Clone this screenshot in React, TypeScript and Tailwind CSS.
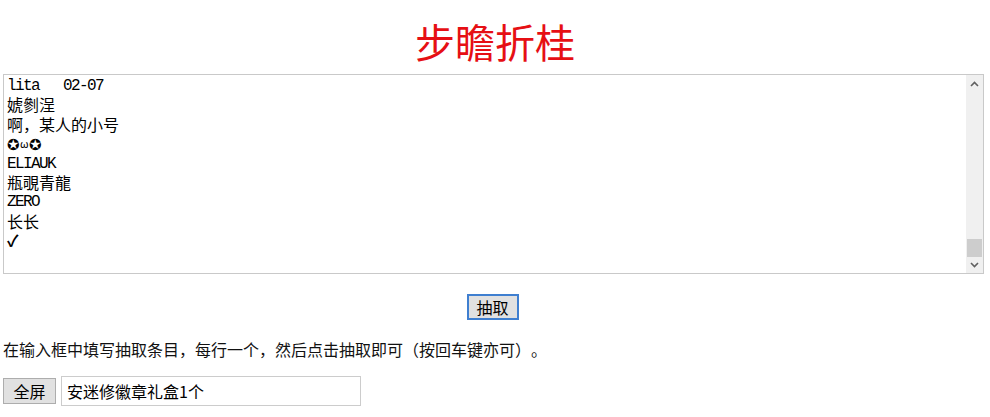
import React from "react";

const cjk = '"Noto Sans CJK SC", "Noto Sans", sans-serif';
const mono = '"Liberation Mono", "Noto Sans CJK SC", monospace';

type Line = { text: string; latin?: boolean };

const lines: Line[] = [
  { text: "lita   02-07", latin: true },
  { text: "婋剼浧" },
  { text: "啊，某人的小号" },
  { text: "✪ω✪" },
  { text: "ELIAUK", latin: true },
  { text: "瓶覗青龍" },
  { text: "ZERO", latin: true },
  { text: "长长" },
  { text: "✓" },
];

function Chevron({ up }: { up?: boolean }) {
  return (
    <svg width="9" height="6" viewBox="0 0 9 6">
      <path
        d={up ? "M1 5 L4.5 1.5 L8 5" : "M1 1 L4.5 4.5 L8 1"}
        fill="none"
        stroke="#606060"
        strokeWidth="1.6"
      />
    </svg>
  );
}

export default function App() {
  return (
    <div
      className="w-[990px] h-[417px] overflow-hidden bg-white px-[3px] text-black"
      style={{ fontFamily: cjk }}
    >
      <h1 className="mt-[17px] text-center text-[40px] leading-[48px] font-normal text-[#e60f14]">
        步瞻折桂
      </h1>

      <div className="mt-[9px] flex h-[200px] w-[981px] border border-[#c9c9c9] bg-white">
        <div className="flex-1 pl-[3px] pt-[1px]">
          {lines.map((l, i) =>
            l.latin ? (
              <div
                key={i}
                className="h-[19.4px] whitespace-pre pt-[2px] text-[16px] leading-[17.4px] tracking-[-1.6px] text-black"
                style={{ fontFamily: mono }}
              >
                {l.text}
              </div>
            ) : (
              <div
                key={i}
                className="h-[19.4px] whitespace-pre text-[16px] leading-[19.4px] text-black"
                style={{ fontFamily: cjk }}
              >
                {l.text === "✪ω✪" ? (
                  <span className="text-[15px]">
                    ✪<span className="text-[11px] align-[2px]">ω</span>✪
                  </span>
                ) : l.text === "✓" ? (
                  <span className="font-bold">✓</span>
                ) : (
                  <span className="text-black">{l.text}</span>
                )}
              </div>
            )
          )}
        </div>
        <div className="flex w-[17px] flex-col bg-[#f0f0f0]">
          <div className="flex h-[17px] items-center justify-center">
            <Chevron up />
          </div>
          <div className="flex flex-1 flex-col justify-end">
            <div className="mx-[1px] h-[18px] bg-[#cdcdcd]" />
          </div>
          <div className="flex h-[16px] items-center justify-center">
            <Chevron />
          </div>
        </div>
      </div>

      <div className="mt-[20px] flex justify-center pr-[5px]">
        <button className="h-[26px] w-[52px] border-2 border-[#3f7fd0] bg-[#e1e1e1] text-[16px] leading-[20px] text-black">
          抽取
        </button>
      </div>

      <p className="mt-[17px] text-[16px] leading-[24px] text-[#111]">
        在输入框中填写抽取条目，每行一个，然后点击抽取即可
        <span className="inline-block w-[16px] text-center">（</span>
        按回车键亦可
        <span className="inline-block w-[16px] text-center">）</span>。
      </p>

      <div className="mt-[15px] flex items-center gap-[5px]">
        <button className="h-[26px] w-[53px] border border-[#adadad] bg-[#e1e1e1] text-[16px] leading-[20px] text-black">
          全屏
        </button>
        <input
          defaultValue="安迷修徽章礼盒1个"
          className="h-[30px] w-[300px] border border-[#cccccc] px-[5px] text-[16px] text-black outline-none"
          style={{ fontFamily: cjk }}
        />
      </div>
    </div>
  );
}
